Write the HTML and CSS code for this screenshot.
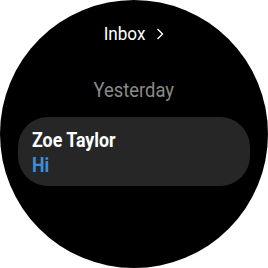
FILE: index.html
```html
<!DOCTYPE html>
<html>
<head>
<meta charset="utf-8">
<link rel="stylesheet" href="styles.css">
</head>
<body>
<div class="watch">
  <div class="header">
    <span class="title">Inbox</span>
    <svg class="chev" width="24" height="24" viewBox="0 0 24 24"><path d="M9.5 7 L14.5 12 L9.5 17" fill="none" stroke="#fff" stroke-width="1.4"/></svg>
  </div>
  <div class="section">Yesterday</div>
  <div class="card">
    <div class="name">Zoe Taylor</div>
    <div class="msg">Hi</div>
  </div>
</div>
</body>
</html>
```
FILE: styles.css
```css
html, body {
  margin: 0;
  padding: 0;
  background: #fff;
}
.watch {
  width: 268px;
  height: 268px;
  border-radius: 50%;
  background: #000;
  display: flex;
  flex-direction: column;
  align-items: center;
  font-family: Roboto, "Noto Sans", sans-serif;
  color: #fff;
  overflow: hidden;
}
.header {
  display: flex;
  align-items: center;
  gap: 3px;
  margin-top: 22px;
  height: 24px;
  padding-left: 3px;
}
.title {
  display: inline-block;
  font-size: 19px;
  line-height: 24px;
  transform: scaleX(0.9);
  transform-origin: right center;
}
.section {
  margin-top: 30px;
  font-size: 20px;
  line-height: 28px;
  color: #8a8a8a;
  transform: scaleX(0.92);
}
.card {
  align-self: stretch;
  margin: 13px 18px 0;
  height: 69px;
  box-sizing: border-box;
  border-radius: 30px;
  background: #262626;
  padding: 11px 14px;
  display: flex;
  flex-direction: column;
}
.name,
.msg {
  font-size: 20px;
  font-weight: bold;
  line-height: 25px;
  transform: scaleX(0.89);
  transform-origin: left center;
}
.msg {
  color: #3d8fd9;
}
```
